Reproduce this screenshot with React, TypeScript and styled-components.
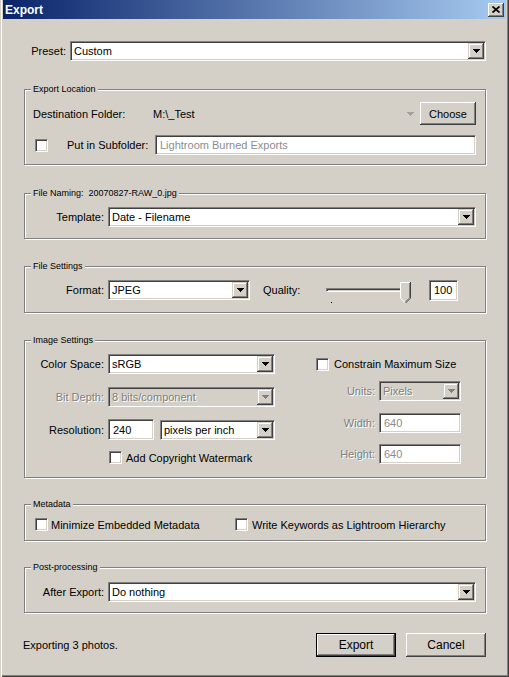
import styled, { createGlobalStyle, css } from 'styled-components';

const face = '#d4d0c8';
const shadow = '#808080';
const darkShadow = '#404040';
const highlight = '#ffffff';

const GlobalStyle = createGlobalStyle`
  html, body {
    margin: 0;
    padding: 0;
    background: ${face};
  }
  body {
    font-family: "Liberation Sans", Arial, sans-serif;
    font-size: 11px;
    color: #000;
  }
`;

const sunken = css`
  box-sizing: border-box;
  border: 1px solid;
  border-color: ${shadow} ${highlight} ${highlight} ${shadow};
  box-shadow: inset 1px 1px ${darkShadow}, inset -1px -1px ${face};
`;

const disabledText = css`
  color: ${shadow};
  text-shadow: 1px 1px ${highlight};
`;

const Window = styled.div`
  box-sizing: border-box;
  width: 509px;
  height: 677px;
  padding: 0 3px 3px;
  display: flex;
  flex-direction: column;
  background: ${face};
  box-shadow: inset 1px 0 ${face}, inset 2px 0 ${highlight},
    inset -1px -1px ${darkShadow}, inset -2px -2px ${shadow};
`;

const TitleBar = styled.div`
  height: 19px;
  display: flex;
  align-items: center;
  justify-content: space-between;
  padding: 0 2px;
  background: linear-gradient(to right, #0a246a, #a6caf0);
`;

const Title = styled.span`
  color: #fff;
  font-weight: bold;
  font-size: 12px;
`;

const CloseButton = styled.button`
  width: 16px;
  height: 14px;
  padding: 0;
  border: 0;
  display: flex;
  align-items: center;
  justify-content: center;
  background: ${face};
  box-shadow: inset -1px -1px ${darkShadow}, inset 1px 1px ${highlight},
    inset -2px -2px ${shadow};
`;

const Body = styled.div`
  flex: 1;
  display: flex;
  flex-direction: column;
  padding: 22px 20px 0 21px;
`;

const Row = styled.div<{ $h: number; $mt?: number }>`
  display: flex;
  align-items: center;
  height: ${p => p.$h}px;
  margin-top: ${p => p.$mt ?? 0}px;
`;

const FieldLabel = styled.span<{ $width?: number; $left?: boolean; $disabled?: boolean; $ml?: number }>`
  flex: none;
  width: ${p => (p.$width ? `${p.$width}px` : 'auto')};
  margin-left: ${p => p.$ml ?? 0}px;
  margin-right: 4px;
  text-align: ${p => (p.$left ? 'left' : 'right')};
  white-space: nowrap;
  ${p => p.$disabled && disabledText}
`;

const Combo = styled.div<{ $width?: number; $disabled?: boolean; $ml?: number }>`
  ${sunken};
  flex: ${p => (p.$width ? 'none' : '1')};
  width: ${p => (p.$width ? `${p.$width}px` : 'auto')};
  height: 20px;
  margin-left: ${p => p.$ml ?? 0}px;
  padding: 1px;
  display: flex;
  align-items: center;
  background: ${p => (p.$disabled ? face : highlight)};
`;

const ComboValue = styled.span<{ $disabled?: boolean }>`
  flex: 1;
  padding-left: 2px;
  white-space: nowrap;
  overflow: hidden;
  ${p => p.$disabled && disabledText}
`;

const ComboButton = styled.span`
  flex: none;
  width: 16px;
  height: 16px;
  display: flex;
  align-items: center;
  justify-content: center;
  background: ${face};
  box-shadow: inset -1px -1px ${darkShadow}, inset 1px 1px ${face},
    inset -2px -2px ${shadow}, inset 2px 2px ${highlight};
`;

const TextBox = styled.div<{ $width?: number; $h?: number; $muted?: boolean; $ml?: number }>`
  ${sunken};
  flex: ${p => (p.$width ? 'none' : '1')};
  width: ${p => (p.$width ? `${p.$width}px` : 'auto')};
  height: ${p => p.$h ?? 20}px;
  margin-left: ${p => p.$ml ?? 0}px;
  padding: 0 4px;
  display: flex;
  align-items: center;
  background: ${highlight};
  color: ${p => (p.$muted ? '#8c8c8c' : '#000')};
  white-space: nowrap;
`;

const CheckBox = styled.span<{ $ml?: number }>`
  ${sunken};
  flex: none;
  width: 13px;
  height: 13px;
  margin-left: ${p => p.$ml ?? 0}px;
  background: ${highlight};
`;

const CheckLabel = styled.span<{ $ml: number; $width?: number }>`
  margin-left: ${p => p.$ml}px;
  width: ${p => (p.$width ? `${p.$width}px` : 'auto')};
  white-space: nowrap;
`;

const Group = styled.fieldset<{ $mt: number }>`
  margin: ${p => p.$mt}px 0 0;
  padding: 0;
  min-inline-size: 0;
  border: 1px solid ${shadow};
  box-shadow: inset 1px 1px ${highlight}, 1px 1px ${highlight};
`;

const Legend = styled.legend`
  margin-left: 6px;
  padding: 0 2px;
  font-size: 9px;
  line-height: 10px;
  background: ${face};
  white-space: pre;
`;

const GroupBody = styled.div<{ $pt: number; $pb: number; $pl?: number; $pr?: number }>`
  display: flex;
  flex-direction: column;
  padding: ${p => p.$pt}px ${p => p.$pr ?? 9}px ${p => p.$pb}px ${p => p.$pl ?? 0}px;
`;

const Columns = styled.div`
  display: flex;
  align-items: flex-start;
`;

const Column = styled.div<{ $ml?: number }>`
  display: flex;
  flex-direction: column;
  margin-left: ${p => p.$ml ?? 0}px;
`;

const PathValue = styled.span`
  flex: 1;
  white-space: nowrap;
`;

const PathArrow = styled.span`
  display: flex;
  margin-right: 6px;
`;

const PushButton = styled.button<{ $width: number; $h: number; $default?: boolean; $size?: number }>`
  flex: none;
  box-sizing: border-box;
  width: ${p => p.$width}px;
  height: ${p => p.$h}px;
  padding: 0;
  font-family: inherit;
  font-size: ${p => p.$size ?? 11}px;
  color: #000;
  background: ${face};
  border: ${p => (p.$default ? '1px solid #000' : '0')};
  box-shadow: inset -1px -1px ${darkShadow}, inset 1px 1px ${highlight},
    inset -2px -2px ${shadow};
`;

const SliderBox = styled.div`
  position: relative;
  flex: none;
  width: 88px;
  height: 20px;
`;

const SliderTrack = styled.div`
  box-sizing: border-box;
  width: 84px;
  height: 4px;
  margin-top: 8px;
  border: 1px solid;
  border-color: ${shadow} ${highlight} ${highlight} ${shadow};
  box-shadow: inset 1px 1px ${darkShadow};
`;

const SliderThumb = styled.svg`
  position: absolute;
  left: 74px;
  top: 2px;
`;

const Tick = styled.span<{ $x: number }>`
  position: absolute;
  left: ${p => p.$x}px;
  top: 22px;
  width: 1px;
  height: 1px;
  background: #000;
`;

const Footer = styled.div`
  display: flex;
  align-items: center;
  height: 24px;
  margin-top: 20px;
  gap: 10px;
`;

const Status = styled.span`
  flex: 1;
  margin-left: -1px;
`;

const Arrow = ({ disabled, color }: { disabled?: boolean; color?: string }) => (
  <svg width="7" height="4" viewBox="0 0 7 4" shapeRendering="crispEdges">
    <path
      d="M0 0h7v1H0z M1 1h5v1H1z M2 2h3v1H2z M3 3h1v1H3z"
      fill={color ?? (disabled ? shadow : '#000')}
    />
  </svg>
);

type ComboProps = { value: string; width?: number; disabled?: boolean; ml?: number };

const ComboBox = ({ value, width, disabled, ml }: ComboProps) => (
  <Combo $width={width} $disabled={disabled} $ml={ml}>
    <ComboValue $disabled={disabled}>{value}</ComboValue>
    <ComboButton>
      <Arrow disabled={disabled} />
    </ComboButton>
  </Combo>
);

const App = () => {
  return (
    <>
      <GlobalStyle />
      <Window>
        <TitleBar>
          <Title>Export</Title>
          <CloseButton aria-label="Close">
            <svg width="8" height="7" viewBox="0 0 8 7">
              <path d="M0.5 0.5L7.5 6.5M7.5 0.5L0.5 6.5" stroke="#000" strokeWidth="1.7" />
            </svg>
          </CloseButton>
        </TitleBar>

        <Body>
          <Row $h={20}>
            <FieldLabel $width={42}>Preset:</FieldLabel>
            <ComboBox value="Custom" />
          </Row>

          <Group $mt={23}>
            <Legend>Export Location</Legend>
            <GroupBody $pt={8} $pb={9} $pl={8}>
              <Row $h={23}>
                <FieldLabel $width={116} $left>
                  Destination Folder:
                </FieldLabel>
                <PathValue>M:\_Test</PathValue>
                <PathArrow>
                  <Arrow color="#a0a0a0" />
                </PathArrow>
                <PushButton $width={56} $h={23}>
                  Choose
                </PushButton>
              </Row>
              <Row $h={20} $mt={10}>
                <CheckBox $ml={2} />
                <CheckLabel $ml={19} $width={88}>
                  Put in Subfolder:
                </CheckLabel>
                <TextBox $muted>Lightroom Burned Exports</TextBox>
              </Row>
            </GroupBody>
          </Group>

          <Group $mt={23}>
            <Legend>File Naming:  20070827-RAW_0.jpg</Legend>
            <GroupBody $pt={9} $pb={11}>
              <Row $h={20}>
                <FieldLabel $width={79}>Template:</FieldLabel>
                <ComboBox value="Date - Filename" />
              </Row>
            </GroupBody>
          </Group>

          <Group $mt={22}>
            <Legend>File Settings</Legend>
            <GroupBody $pt={9} $pb={12}>
              <Row $h={20}>
                <FieldLabel $width={79}>Format:</FieldLabel>
                <ComboBox value="JPEG" width={142} />
                <FieldLabel $width={59} $left $ml={13}>
                  Quality:
                </FieldLabel>
                <SliderBox>
                  <SliderTrack />
                  <Tick $x={5} />
                  <Tick $x={79} />
                  <SliderThumb width="11" height="21" viewBox="0 0 11 21">
                    <path d="M0 0H11V16L5.5 21L0 16Z" fill={face} />
                    <path d="M0.5 16.2V0.5H10" stroke={highlight} fill="none" />
                    <path d="M0.5 16.2L5.2 20.6" stroke={highlight} fill="none" />
                    <path d="M10.5 0V16.2L5.5 21" stroke={darkShadow} fill="none" />
                    <path d="M9.5 1V15.8L5.5 19.6" stroke={shadow} fill="none" />
                  </SliderThumb>
                </SliderBox>
                <TextBox $width={29} $h={21} $ml={15}>
                  100
                </TextBox>
              </Row>
            </GroupBody>
          </Group>

          <Group $mt={22}>
            <Legend>Image Settings</Legend>
            <GroupBody $pt={9} $pb={13}>
              <Columns>
                <Column>
                  <Row $h={20}>
                    <FieldLabel $width={79}>Color Space:</FieldLabel>
                    <ComboBox value="sRGB" width={167} />
                  </Row>
                  <Row $h={20} $mt={13}>
                    <FieldLabel $width={79} $disabled>
                      Bit Depth:
                    </FieldLabel>
                    <ComboBox value="8 bits/component" width={167} disabled />
                  </Row>
                  <Row $h={21} $mt={12}>
                    <FieldLabel $width={79}>Resolution:</FieldLabel>
                    <TextBox $width={46} $h={21}>
                      240
                    </TextBox>
                    <ComboBox value="pixels per inch" width={115} ml={6} />
                  </Row>
                  <Row $h={13} $mt={11}>
                    <CheckBox $ml={84} />
                    <CheckLabel $ml={4}>Add Copyright Watermark</CheckLabel>
                  </Row>
                </Column>
                <Column $ml={41}>
                  <Row $h={20}>
                    <CheckBox />
                    <CheckLabel $ml={5}>Constrain Maximum Size</CheckLabel>
                  </Row>
                  <Row $h={20} $mt={7}>
                    <FieldLabel $width={59} $disabled>
                      Units:
                    </FieldLabel>
                    <ComboBox value="Pixels" width={82} disabled />
                  </Row>
                  <Row $h={20} $mt={12}>
                    <FieldLabel $width={59} $disabled>
                      Width:
                    </FieldLabel>
                    <TextBox $width={82} $muted>
                      640
                    </TextBox>
                  </Row>
                  <Row $h={20} $mt={11}>
                    <FieldLabel $width={59} $disabled>
                      Height:
                    </FieldLabel>
                    <TextBox $width={82} $muted>
                      640
                    </TextBox>
                  </Row>
                </Column>
              </Columns>
            </GroupBody>
          </Group>

          <Group $mt={21}>
            <Legend>Metadata</Legend>
            <GroupBody $pt={9} $pb={9}>
              <Row $h={13}>
                <CheckBox $ml={10} />
                <CheckLabel $ml={3} $width={184}>
                  Minimize Embedded Metadata
                </CheckLabel>
                <CheckBox />
                <CheckLabel $ml={4}>Write Keywords as Lightroom Hierarchy</CheckLabel>
              </Row>
            </GroupBody>
          </Group>

          <Group $mt={21}>
            <Legend>Post-processing</Legend>
            <GroupBody $pt={10} $pb={10}>
              <Row $h={20}>
                <FieldLabel $width={79}>After Export:</FieldLabel>
                <ComboBox value="Do nothing" />
              </Row>
            </GroupBody>
          </Group>

          <Footer>
            <Status>Exporting 3 photos.</Status>
            <PushButton $width={80} $h={24} $default $size={12}>
              Export
            </PushButton>
            <PushButton $width={80} $h={24} $size={12}>
              Cancel
            </PushButton>
          </Footer>
        </Body>
      </Window>
    </>
  );
};

export default App;
